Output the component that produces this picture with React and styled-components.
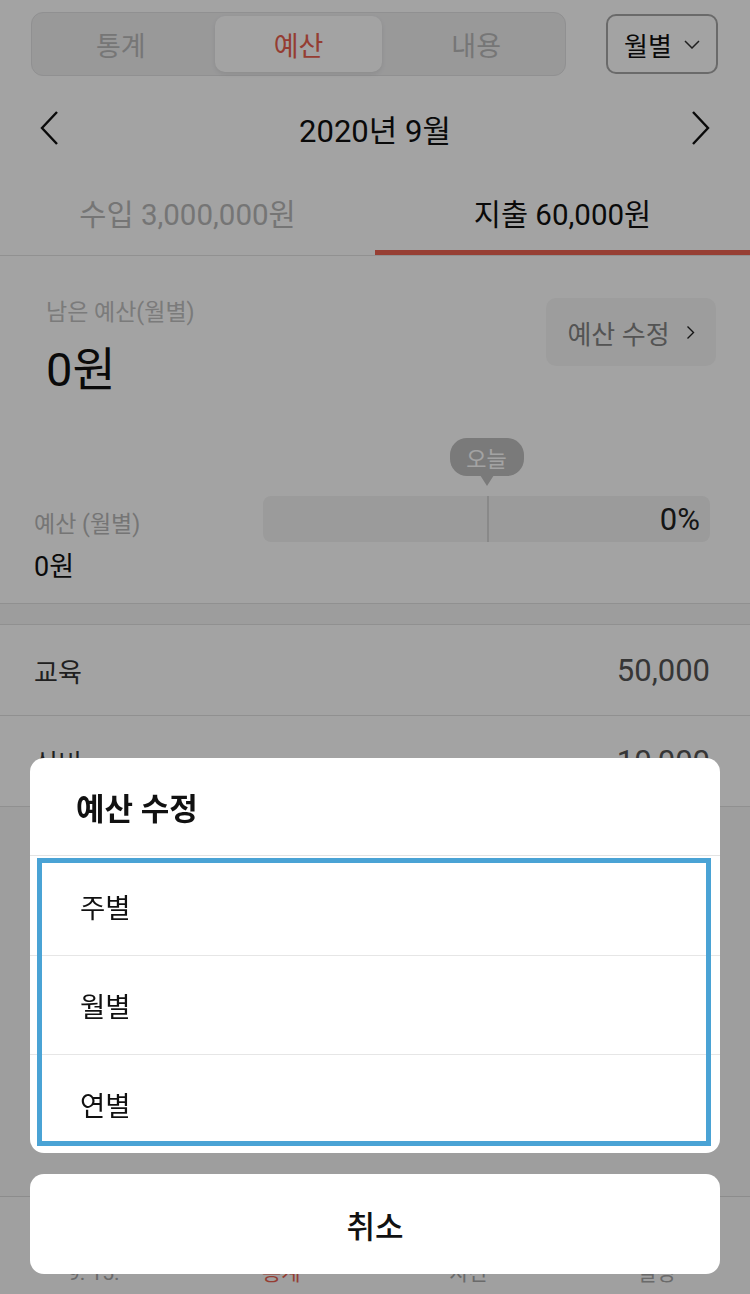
import React from 'react';
import styled, { createGlobalStyle } from 'styled-components';
import { CalendarDays, PieChart, Wallet, Settings } from 'lucide-react';

const GlobalStyle = createGlobalStyle`
  html, body, #root {
    height: 100%;
  }
  body {
    margin: 0;
    font-family: Roboto, "Noto Sans CJK KR", sans-serif;
    color: #111;
    background: #fff;
  }
  * {
    box-sizing: border-box;
  }
`;

const SEGMENTS = ['통계', '예산', '내용'];
const OPTIONS = ['주별', '월별', '연별'];
const CATEGORIES = [
  { name: '교육', amount: '50,000' },
  { name: '식비', amount: '10,000' },
];
const TABS = [
  { label: '9. 15.', Icon: CalendarDays },
  { label: '통계', Icon: PieChart, active: true },
  { label: '자산', Icon: Wallet },
  { label: '설정', Icon: Settings },
];

const today = 15;
const daysInMonth = 30;

const App = () => {
  const todayPct = (today / daysInMonth) * 100;

  return (
    <>
      <GlobalStyle />
      <Page>
        <Main>
          <Header>
            <Segmented>
              {SEGMENTS.map((s) => (
                <Segment key={s} active={s === '예산'}>{s}</Segment>
              ))}
            </Segmented>
            <PeriodSelect>
              월별
              <svg width="16" height="9" viewBox="0 0 16 9">
                <polyline points="1,1 8,8 15,1" fill="none" stroke="#333" strokeWidth="1.5" />
              </svg>
            </PeriodSelect>
          </Header>

          <DateNav>
            <Arrow viewBox="0 0 20 36">
              <polyline points="17,2 2,18 17,34" />
            </Arrow>
            <DateTitle>2020년 9월</DateTitle>
            <Arrow viewBox="0 0 20 36">
              <polyline points="3,2 18,18 3,34" />
            </Arrow>
          </DateNav>

          <Tabs>
            <Tab>수입 3,000,000원</Tab>
            <Tab active>지출 60,000원</Tab>
          </Tabs>

          <BudgetTop>
            <div>
              <MutedLabel>남은 예산(월별)</MutedLabel>
              <BigAmount>0원</BigAmount>
            </div>
            <EditButton>
              예산 수정
              <svg width="9" height="15" viewBox="0 0 9 15">
                <polyline points="1.5,1.5 7.5,7.5 1.5,13.5" fill="none" stroke="#222" strokeWidth="1.4" />
              </svg>
            </EditButton>
          </BudgetTop>

          <Progress>
            <BudgetInfo>
              <SmallLabel>예산 (월별)</SmallLabel>
              <SmallAmount>0원</SmallAmount>
            </BudgetInfo>
            <BarWrap>
              <TodayBubble style={{ left: `${todayPct}%` }}>오늘</TodayBubble>
              <Bar>
                <TodayLine style={{ left: `${todayPct}%` }} />
                <Percent>0%</Percent>
              </Bar>
            </BarWrap>
          </Progress>

          <Band />

          <List>
            {CATEGORIES.map((c) => (
              <Row key={c.name}>
                <RowName>{c.name}</RowName>
                <RowAmount>{c.amount}</RowAmount>
              </Row>
            ))}
          </List>
        </Main>

        <TabBar>
          {TABS.map(({ label, Icon, active }) => (
            <TabItem key={label} active={active}>
              <Icon size={40} strokeWidth={1.5} />
              <span>{label}</span>
            </TabItem>
          ))}
        </TabBar>
      </Page>

      <Overlay />
      <Sheet>
        <Card>
          <CardTitle>예산 수정</CardTitle>
          <OptionList>
            {OPTIONS.map((o) => (
              <Option key={o}>{o}</Option>
            ))}
          </OptionList>
        </Card>
        <CancelButton>취소</CancelButton>
      </Sheet>
    </>
  );
};

export default App;

const Page = styled.div`
  display: flex;
  flex-direction: column;
  min-height: 100vh;
  background: #f8f8f8;
`;

const Main = styled.div`
  flex: 1;
`;

const Header = styled.div`
  display: flex;
  align-items: center;
  justify-content: space-between;
  padding: 12px 32px 0 31px;
  background: #fff;
`;

const Segmented = styled.div`
  display: grid;
  grid-template-columns: repeat(3, 1fr);
  width: 535px;
  height: 64px;
  background: #efeff0;
  border: 1px solid #e2e2e3;
  border-radius: 12px;
`;

const Segment = styled.div`
  display: flex;
  align-items: center;
  justify-content: center;
  margin: 3px 5px;
  border-radius: 10px;
  font-size: 27px;
  color: ${(p) => (p.active ? '#e9604f' : '#b9b9b9')};
  background: ${(p) => (p.active ? '#fff' : 'transparent')};
  box-shadow: ${(p) => (p.active ? '0 2px 5px rgba(0, 0, 0, 0.08)' : 'none')};
`;

const PeriodSelect = styled.div`
  display: flex;
  align-items: center;
  justify-content: center;
  gap: 12px;
  width: 112px;
  height: 60px;
  border: 2px solid #a6a6a6;
  border-radius: 10px;
  font-size: 26px;
  color: #111;
`;

const DateNav = styled.div`
  display: flex;
  align-items: center;
  justify-content: space-between;
  height: 104px;
  padding: 0 40px;
  background: #fff;
`;

const Arrow = styled.svg`
  width: 20px;
  height: 36px;
  fill: none;
  stroke: #111;
  stroke-width: 2.4;
`;

const DateTitle = styled.div`
  font-size: 31px;
  color: #111;
`;

const Tabs = styled.div`
  display: flex;
  border-bottom: 1px solid #e3e3e3;
  background: #fff;
`;

const Tab = styled.div`
  flex: 1;
  display: flex;
  align-items: center;
  justify-content: center;
  height: 75px;
  padding-bottom: 6px;
  font-size: 29.5px;
  color: ${(p) => (p.active ? '#111' : '#b8b8b8')};
  border-bottom: 5px solid ${(p) => (p.active ? '#ec6352' : 'transparent')};
`;

const BudgetTop = styled.div`
  display: flex;
  align-items: flex-start;
  justify-content: space-between;
  padding: 42px 34px 0 46px;
  background: #fff;
`;

const MutedLabel = styled.div`
  font-size: 23px;
  line-height: 30px;
  color: #c0c0c0;
`;

const BigAmount = styled.div`
  margin-top: 14px;
  font-size: 47px;
  line-height: 56px;
  color: #111;
`;

const EditButton = styled.div`
  display: flex;
  align-items: center;
  justify-content: center;
  gap: 16px;
  width: 170px;
  height: 68px;
  background: #f6f6f6;
  border-radius: 10px;
  font-size: 26px;
  color: #848484;
`;

const Progress = styled.div`
  display: grid;
  grid-template-columns: 229px 1fr;
  padding: 40px 40px 20px 34px;
  background: #fff;
`;

const BudgetInfo = styled.div`
  padding-top: 72px;
`;

const SmallLabel = styled.div`
  font-size: 23px;
  line-height: 30px;
  color: #b8b8b8;
`;

const SmallAmount = styled.div`
  margin-top: 11px;
  font-size: 27px;
  line-height: 32px;
  color: #111;
`;

const BarWrap = styled.div`
  position: relative;
  padding-top: 58px;
`;

const TodayBubble = styled.div`
  position: absolute;
  top: 0;
  transform: translateX(-50%);
  display: flex;
  align-items: center;
  justify-content: center;
  width: 74px;
  height: 38px;
  border-radius: 17px;
  background: #bfbfbf;
  font-size: 22px;
  color: #fff;

  &::after {
    content: '';
    position: absolute;
    top: 37px;
    left: 50%;
    margin-left: -7px;
    border-left: 7px solid transparent;
    border-right: 7px solid transparent;
    border-top: 11px solid #bfbfbf;
  }
`;

const Bar = styled.div`
  position: relative;
  display: flex;
  align-items: center;
  justify-content: flex-end;
  height: 46px;
  padding-right: 10px;
  border-radius: 8px;
  background: #f3f3f3;
`;

const TodayLine = styled.div`
  position: absolute;
  top: 0;
  bottom: 0;
  width: 2px;
  background: #d6d6d6;
`;

const Percent = styled.span`
  font-size: 31px;
  color: #222;
`;

const Band = styled.div`
  height: 22px;
  border-top: 1px solid #e2e2e2;
  border-bottom: 1px solid #e2e2e2;
  background: #f6f6f6;
`;

const List = styled.div`
  background: #fff;
`;

const Row = styled.div`
  display: flex;
  align-items: center;
  justify-content: space-between;
  height: 91px;
  padding: 0 40px 0 34px;
  border-bottom: 1px solid #e2e2e2;
`;

const RowName = styled.span`
  font-size: 26px;
  color: #333;
`;

const RowAmount = styled.span`
  font-size: 31px;
  color: #555;
`;

const TabBar = styled.div`
  display: flex;
  height: 98px;
  border-top: 1px solid #dcdcdc;
  background: #fafafa;
`;

const TabItem = styled.div`
  flex: 1;
  display: flex;
  flex-direction: column;
  align-items: center;
  gap: 8px;
  padding-top: 14px;
  font-size: 21px;
  line-height: 28px;
  color: ${(p) => (p.active ? '#e9604f' : '#a6a6a6')};
`;

const Overlay = styled.div`
  position: fixed;
  inset: 0;
  background: rgba(0, 0, 0, 0.36);
`;

const Sheet = styled.div`
  position: fixed;
  left: 30px;
  right: 30px;
  bottom: 20px;
  display: flex;
  flex-direction: column;
  gap: 21px;
`;

const Card = styled.div`
  background: #fff;
  border-radius: 14px;
  overflow: hidden;
`;

const CardTitle = styled.div`
  display: flex;
  align-items: center;
  height: 98px;
  padding-left: 46px;
  border-bottom: 1px solid #e3e3e3;
  font-size: 31px;
  font-weight: 700;
  color: #111;
`;

const OptionList = styled.div`
  position: relative;

  &::after {
    content: '';
    position: absolute;
    top: 2px;
    left: 7px;
    right: 9px;
    bottom: 7px;
    border: 5px solid #4aa3d5;
    pointer-events: none;
  }
`;

const Option = styled.div`
  display: flex;
  align-items: center;
  height: 99px;
  padding-left: 50px;
  font-size: 27.5px;
  color: #111;

  & + & {
    border-top: 1px solid #e6e6e6;
  }
`;

const CancelButton = styled.div`
  display: flex;
  align-items: center;
  justify-content: center;
  height: 100px;
  background: #fff;
  border-radius: 14px;
  font-size: 31px;
  font-weight: 500;
  color: #111;
`;
